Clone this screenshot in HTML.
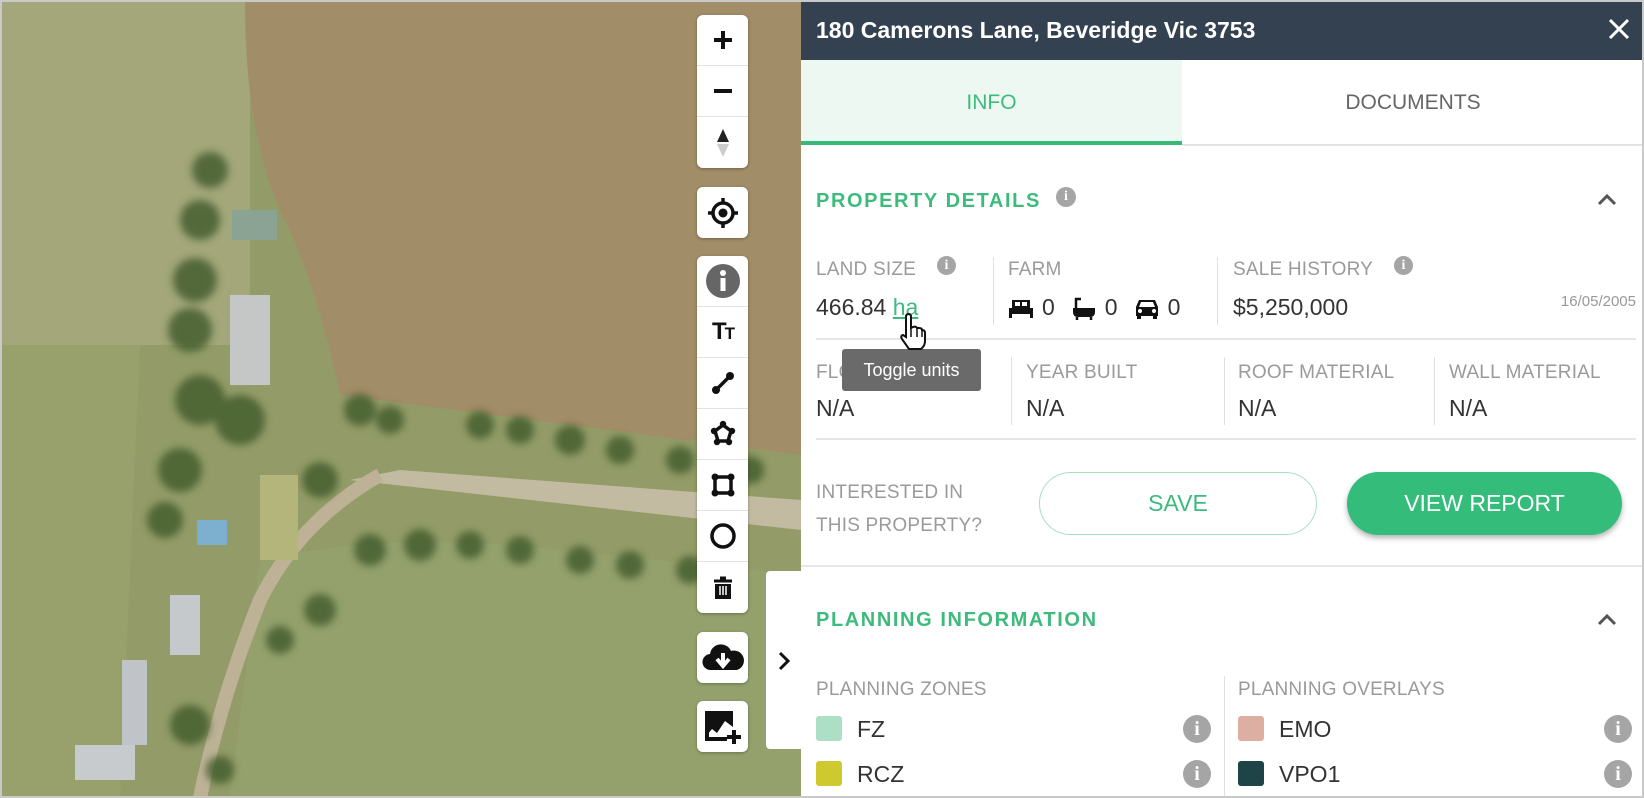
<!DOCTYPE html>
<html><head><meta charset="utf-8"><style>
*{margin:0;padding:0;box-sizing:border-box}
body{width:1644px;height:798px;overflow:hidden;position:relative;font-family:"Liberation Sans",sans-serif;background:#9a9f72}
.a{position:absolute}
#frame{position:absolute;left:0;top:0;width:1644px;height:798px;border:2px solid #c9c9c9;pointer-events:none;z-index:50}
.tb{position:absolute;left:697px;width:51px;background:#fff;border-radius:6px;box-shadow:0 1px 3px rgba(0,0,0,.3)}
.tb .b{height:51px;border-bottom:1px solid #e2e2e2;display:flex;align-items:center;justify-content:center}
.tb .b:last-child{border-bottom:none}
.lbl{position:absolute;font-size:19px;color:#9a9a9a;letter-spacing:.2px}
.val{position:absolute;font-size:23px;color:#333}
.vd{position:absolute;width:1px;background:#e0e0e0}
.hl{position:absolute;height:2px;background:#e6e6e6}
.ic{position:absolute;width:20px;height:20px;border-radius:50%;background:#a5a5a5;color:#fff;font-size:14px;font-weight:bold;text-align:center;line-height:20px;font-family:"Liberation Serif",serif}
.gi{position:absolute;width:28px;height:28px;border-radius:50%;background:#a5a5a5;color:#fff;font-size:20px;font-weight:bold;text-align:center;line-height:28px;font-family:"Liberation Serif",serif}
.sec{position:absolute;left:816px;font-size:20px;font-weight:bold;color:#3dbb7d;letter-spacing:1.6px}
.sw{position:absolute;width:26px;height:25px;border-radius:3px}
.zt{position:absolute;font-size:23px;color:#333}
</style></head><body>
<svg class="a" style="left:0;top:0" width="801" height="798" viewBox="0 0 801 798">
<defs><filter id="bl"><feGaussianBlur stdDeviation="4"/></filter></defs>
<rect width="801" height="798" fill="#939c68"/>
<path d="M0 0H250V345H0Z" fill="#a3a77a"/>
<path d="M0 345H140L120 798H0Z" fill="#98a06c"/>
<path d="M245 0H801V455L340 395Q320 300 290 230Q245 150 245 0Z" fill="#a18d67"/>
<path d="M260 560Q400 530 560 550L801 575V798H230Z" fill="#94a16d"/>
<path d="M350 480L801 530V500L400 470Z" fill="#c2bba2"/>
<path d="M380 475Q300 520 260 600Q220 700 200 798" stroke="#bdb296" stroke-width="14" fill="none"/>
<g fill="#3f5a2c" opacity=".8" filter="url(#bl)">
<circle cx="210" cy="170" r="18"/><circle cx="200" cy="220" r="20"/><circle cx="195" cy="280" r="22"/><circle cx="190" cy="330" r="22"/><circle cx="200" cy="400" r="25"/><circle cx="240" cy="420" r="25"/><circle cx="180" cy="470" r="22"/><circle cx="165" cy="520" r="18"/><circle cx="320" cy="480" r="18"/>
<circle cx="360" cy="410" r="16"/><circle cx="390" cy="420" r="14"/><circle cx="480" cy="425" r="14"/><circle cx="520" cy="430" r="14"/><circle cx="570" cy="440" r="15"/><circle cx="620" cy="450" r="14"/><circle cx="680" cy="460" r="14"/><circle cx="750" cy="470" r="14"/>
<circle cx="370" cy="550" r="16"/><circle cx="420" cy="545" r="16"/><circle cx="470" cy="545" r="14"/><circle cx="520" cy="550" r="14"/><circle cx="580" cy="560" r="14"/><circle cx="630" cy="565" r="14"/><circle cx="690" cy="570" r="14"/><circle cx="320" cy="610" r="16"/><circle cx="280" cy="640" r="14"/><circle cx="190" cy="725" r="20"/><circle cx="220" cy="770" r="14"/>
</g>
<rect x="232" y="210" width="45" height="30" fill="#8aa392"/>
<rect x="230" y="295" width="40" height="90" fill="#c4c7c6"/>
<rect x="260" y="475" width="38" height="85" fill="#b4b57a"/>
<rect x="197" y="520" width="30" height="25" fill="#7db0cf"/>
<rect x="170" y="595" width="30" height="60" fill="#c5c9cc"/>
<rect x="122" y="660" width="25" height="85" fill="#c0c4c8"/>
<rect x="75" y="745" width="60" height="35" fill="#c7cbce"/>
</svg>

<div class="tb" style="top:15px">
<div class="b"><svg width="22" height="22"><path d="M11 2V20M2 11H20" stroke="#111" stroke-width="4"/></svg></div>
<div class="b"><svg width="22" height="22"><path d="M2 11H20" stroke="#111" stroke-width="4"/></svg></div>
<div class="b"><svg width="20" height="32"><path d="M10 2L16 15H4Z" fill="#222"/><path d="M10 30L16 17H4Z" fill="#ccc"/></svg></div>
</div>
<div class="tb" style="top:187px"><div class="b"><svg width="32" height="32"><circle cx="16" cy="16" r="10" stroke="#111" stroke-width="3.5" fill="none"/><circle cx="16" cy="16" r="4.5" fill="#111"/><path d="M16 1V6M16 26V31M1 16H6M26 16H31" stroke="#111" stroke-width="3.5"/></svg></div></div>
<div class="tb" style="top:256px">
<div class="b"><svg width="34" height="34"><circle cx="17" cy="17" r="17" fill="#666"/><circle cx="17" cy="9" r="3" fill="#fff"/><rect x="14.5" y="14" width="5" height="13" fill="#fff"/></svg></div>
<div class="b"><span style="font-weight:bold;font-size:24px;color:#111;letter-spacing:-2px">T<span style="font-size:17px">T</span></span></div>
<div class="b"><svg width="26" height="26"><path d="M6 20L20 6" stroke="#111" stroke-width="3.5"/><circle cx="6" cy="20" r="4" fill="#111"/><circle cx="20" cy="6" r="4" fill="#111"/></svg></div>
<div class="b"><svg width="28" height="28"><path d="M14 5L22 11L19 21H9L6 11Z" stroke="#111" stroke-width="3.5" fill="none" stroke-linejoin="round"/><g fill="#111"><circle cx="14" cy="4" r="3.2"/><circle cx="23" cy="11" r="3.2"/><circle cx="20" cy="22" r="3.2"/><circle cx="8" cy="22" r="3.2"/><circle cx="5" cy="11" r="3.2"/></g></svg></div>
<div class="b"><svg width="28" height="28"><rect x="6" y="6" width="16" height="16" stroke="#111" stroke-width="3.5" fill="none"/><g fill="#111"><circle cx="6" cy="6" r="3.5"/><circle cx="22" cy="6" r="3.5"/><circle cx="6" cy="22" r="3.5"/><circle cx="22" cy="22" r="3.5"/></g></svg></div>
<div class="b"><svg width="28" height="28"><circle cx="14" cy="14" r="11" stroke="#111" stroke-width="3.5" fill="none"/></svg></div>
<div class="b"><svg width="24" height="26"><path d="M3 6H21M9 3H15" stroke="#111" stroke-width="3"/><path d="M4 9H20V24H4Z" fill="#111"/><path d="M9 11V20M12 11V20M15 11V20" stroke="#fff" stroke-width="1.5"/></svg></div>
</div>
<div class="tb" style="top:632px"><div class="b"><svg width="44" height="32"><path d="M10 28A8 8 0 0 1 9 12A11 11 0 0 1 30 9A9 9 0 0 1 36 28Z" fill="#111"/><path d="M22 11V21M16 17L22 24L28 17" stroke="#fff" stroke-width="4" fill="none"/></svg></div></div>
<div class="tb" style="top:701px"><div class="b"><svg width="40" height="40"><path d="M4 4H30V20L22 14L14 26L9 22L4 28Z" fill="#111"/><path d="M4 4V32H24" stroke="#111" stroke-width="4" fill="none"/><path d="M31 23V37M24 30H38" stroke="#111" stroke-width="4"/></svg></div></div>

<div class="a" style="left:766px;top:571px;width:36px;height:178px;background:#fff;border-radius:4px 0 0 4px"></div>
<svg class="a" style="left:776px;top:650px" width="16" height="22"><path d="M4 3L12 11L4 19" stroke="#111" stroke-width="3" fill="none"/></svg>

<div class="a" style="left:801px;top:0;width:843px;height:798px;background:#fff"></div>
<div class="a" style="left:801px;top:0;width:843px;height:60px;background:#334150"></div>
<div class="a" style="left:816px;top:17px;font-size:23px;font-weight:bold;color:#fff">180 Camerons Lane, Beveridge Vic 3753</div>
<svg class="a" style="left:1607px;top:17px" width="24" height="24"><path d="M3 3L21 21M21 3L3 21" stroke="#fff" stroke-width="3"/></svg>
<div class="a" style="left:801px;top:60px;width:381px;height:85px;background:#eef8f2"></div>
<div class="a" style="left:801px;top:141px;width:381px;height:4px;background:#37b977"></div>
<div class="a" style="left:1182px;top:144px;width:462px;height:2px;background:#e3e3e3"></div>
<div class="a" style="left:801px;top:91px;width:381px;text-align:center;font-size:21px;color:#3dbb7d">INFO</div>
<div class="a" style="left:1182px;top:91px;width:462px;text-align:center;font-size:21px;color:#666">DOCUMENTS</div>

<div class="sec" style="top:190px">PROPERTY DETAILS</div>
<div class="ic" style="left:1056px;top:187px">i</div>
<svg class="a" style="left:1597px;top:192px" width="20" height="14"><path d="M2 12L10 4L18 12" stroke="#555" stroke-width="3" fill="none"/></svg>

<div class="lbl" style="left:816px;top:259px">LAND SIZE</div>
<div class="ic" style="left:937px;top:256px;width:19px;height:19px;line-height:19px">i</div>
<div class="lbl" style="left:1008px;top:259px">FARM</div>
<div class="lbl" style="left:1233px;top:259px">SALE HISTORY</div>
<div class="ic" style="left:1394px;top:256px;width:19px;height:19px;line-height:19px">i</div>
<div class="vd" style="left:993px;top:257px;height:68px"></div>
<div class="vd" style="left:1217px;top:257px;height:68px"></div>
<div class="val" style="left:816px;top:294px">466.84 <span style="color:#3dbb7d;text-decoration:underline">ha</span></div>
<div class="val" style="left:1008px;top:294px;display:flex;align-items:center;gap:8px">
<svg width="26" height="22"><rect x="4" y="3" width="18" height="8" fill="#111"/><rect x="1" y="11" width="24" height="6" fill="#111"/><rect x="1" y="17" width="3" height="4" fill="#111"/><rect x="22" y="17" width="3" height="4" fill="#111"/><rect x="7" y="5" width="5" height="4" fill="#fff"/><rect x="14" y="5" width="5" height="4" fill="#fff"/></svg><span style="margin-right:8px">0</span>
<svg width="26" height="24"><path d="M2 12H24V16Q24 21 19 21H7Q2 21 2 16Z" fill="#111"/><path d="M5 12V3H10" stroke="#111" stroke-width="2.5" fill="none"/><path d="M6 21V24M20 21V24" stroke="#111" stroke-width="2.5"/></svg><span style="margin-right:8px">0</span>
<svg width="26" height="22"><path d="M5 3H21L24 10V19H2V10Z" fill="#111"/><path d="M7 5H19L21 10H5Z" fill="#fff"/><circle cx="6" cy="14" r="2" fill="#fff"/><circle cx="20" cy="14" r="2" fill="#fff"/><rect x="3" y="19" width="4" height="3" fill="#111"/><rect x="19" y="19" width="4" height="3" fill="#111"/></svg><span>0</span></div>
<div class="val" style="left:1233px;top:294px">$5,250,000</div>
<div class="a" style="right:8px;top:293px;font-size:15px;color:#999">16/05/2005</div>
<div class="hl" style="left:816px;top:338px;width:820px"></div>

<div class="lbl" style="left:816px;top:362px">FLOOR</div>
<div class="lbl" style="left:1026px;top:362px">YEAR BUILT</div>
<div class="lbl" style="left:1238px;top:362px">ROOF MATERIAL</div>
<div class="lbl" style="left:1449px;top:362px">WALL MATERIAL</div>
<div class="vd" style="left:1011px;top:357px;height:68px"></div>
<div class="vd" style="left:1224px;top:357px;height:68px"></div>
<div class="vd" style="left:1434px;top:357px;height:68px"></div>
<div class="val" style="left:816px;top:395px">N/A</div>
<div class="val" style="left:1026px;top:395px">N/A</div>
<div class="val" style="left:1238px;top:395px">N/A</div>
<div class="val" style="left:1449px;top:395px">N/A</div>
<div class="hl" style="left:816px;top:438px;width:820px"></div>

<div class="a" style="left:842px;top:349px;width:139px;height:42px;background:#6a6a6a;border-radius:3px;color:#fff;font-size:18px;text-align:center;line-height:42px">Toggle units</div>
<svg class="a" style="left:898px;top:313px" width="30" height="40"><path d="M8 4Q8 1 10.5 1Q13 1 13 4V15L15 14Q18 13 19 15L21 15Q24 15 24 17Q27 17 27 20V28Q27 33 23 36H11L4 26Q2 23 5 22L8 24Z" fill="#fff" stroke="#111" stroke-width="2"/><path d="M13 14V24M19 15V24M24 17V24" stroke="#111" stroke-width="1.5"/></svg>

<div class="lbl" style="left:816px;top:476px;line-height:33px">INTERESTED IN<br>THIS PROPERTY?</div>
<div class="a" style="left:1039px;top:472px;width:278px;height:63px;border:1.5px solid #a8dfc3;border-radius:32px;text-align:center;line-height:60px;font-size:23px;color:#3dbb7d">SAVE</div>
<div class="a" style="left:1347px;top:472px;width:275px;height:63px;background:#34bc7b;border-radius:32px;text-align:center;line-height:63px;font-size:23px;color:#fff;box-shadow:0 3px 6px rgba(0,0,0,.3)">VIEW REPORT</div>
<div class="hl" style="left:801px;top:565px;width:843px"></div>

<div class="sec" style="top:609px">PLANNING INFORMATION</div>
<svg class="a" style="left:1597px;top:612px" width="20" height="14"><path d="M2 12L10 4L18 12" stroke="#555" stroke-width="3" fill="none"/></svg>
<div class="lbl" style="left:816px;top:679px">PLANNING ZONES</div>
<div class="lbl" style="left:1238px;top:679px">PLANNING OVERLAYS</div>
<div class="vd" style="left:1224px;top:676px;height:122px"></div>
<div class="sw" style="left:816px;top:716px;background:#acdfc5"></div>
<div class="zt" style="left:857px;top:716px">FZ</div>
<div class="gi" style="left:1183px;top:715px">i</div>
<div class="sw" style="left:816px;top:761px;background:#cdc92e"></div>
<div class="zt" style="left:857px;top:761px">RCZ</div>
<div class="gi" style="left:1183px;top:760px">i</div>
<div class="sw" style="left:1238px;top:716px;background:#dcafa2"></div>
<div class="zt" style="left:1279px;top:716px">EMO</div>
<div class="gi" style="left:1604px;top:715px">i</div>
<div class="sw" style="left:1238px;top:761px;background:#1e4447"></div>
<div class="zt" style="left:1279px;top:761px">VPO1</div>
<div class="gi" style="left:1604px;top:760px">i</div>
<div id="frame"></div>
</body></html>
